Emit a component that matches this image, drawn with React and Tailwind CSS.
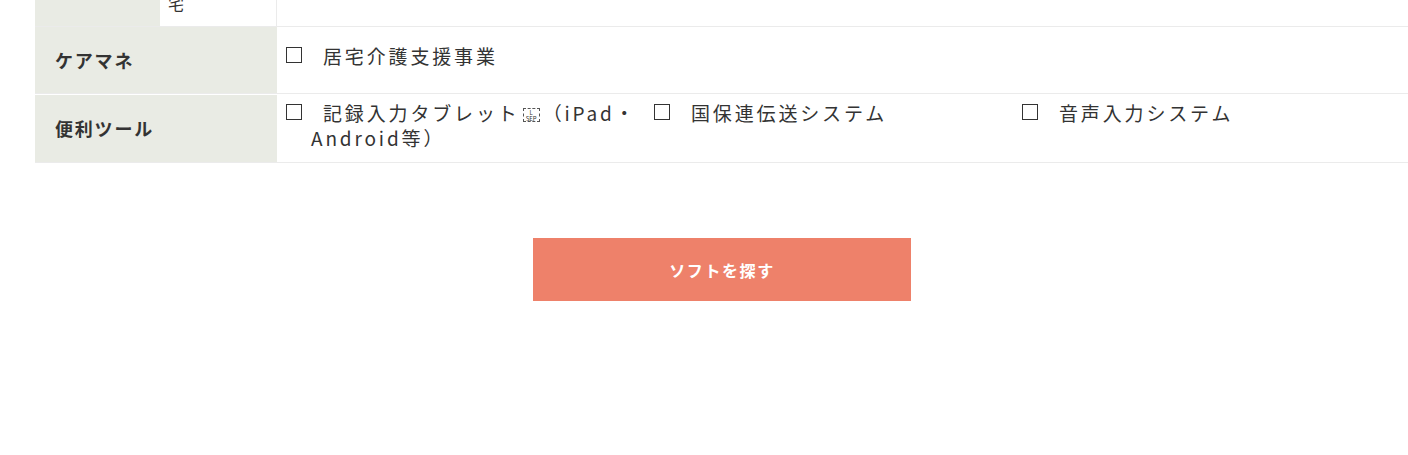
import React from 'react';

const font = { fontFamily: '"Noto Sans CJK JP", "Noto Sans", sans-serif' };

const Check = () => (
  <span className="inline-block w-4 h-4 border border-[#333] bg-white align-[1px] mr-[21px] indent-0"></span>
);

// glyph box shown for the line-separator character
const Sep = () => (
  <span className="inline-block w-[17px] h-[14px] ml-[3px] mr-[3px] pt-[1px] border border-dashed border-[#555] align-[-1px] indent-0 tracking-normal leading-[6px] text-[6px] text-center overflow-hidden">
    L<br />SEP
  </span>
);

const Item = ({ children }) => (
  <div className="w-[368px] pl-[25px] -indent-[25px] pr-4">
    <Check />
    {children}
  </div>
);

export default function App() {
  return (
    <div className="w-full h-[455px] bg-white overflow-hidden text-[#333]" style={font}>
      <div className="ml-[35px] w-[1374px]">
        {/* partial row from above */}
        <div className="flex h-[27px] border-b border-[#ebebeb]">
          <div className="w-[125px] bg-[#e9ebe4]"></div>
          <div className="w-[117px] bg-white border-r border-[#ebebeb] overflow-hidden">
            <div className="-mt-[9px] pl-[8px] text-[16px] leading-[25px]">宅</div>
          </div>
          <div className="flex-1"></div>
        </div>

        {/* ケアマネ */}
        <div className="flex border-b border-[#ebebeb]">
          <div className="w-[242px] shrink-0 bg-[#e9ebe4] flex items-center pl-5 h-[66px] text-[18px] font-bold tracking-[0.1em]">
            ケアマネ
          </div>
          <div className="flex-1 flex items-center pl-[9px] pt-[4px] pb-[14px]">
            <div className="flex text-[19px] leading-[25px] tracking-[0.15em]">
              <Item>居宅介護支援事業</Item>
            </div>
          </div>
        </div>

        {/* 便利ツール */}
        <div className="flex border-b border-[#ebebeb]">
          <div className="w-[242px] shrink-0 bg-[#e9ebe4] border-t border-white flex items-center pl-5 min-h-[66px] text-[18px] font-bold tracking-[0.1em]">
            便利ツール
          </div>
          <div className="flex-1 flex items-center pl-[9px] pt-[6px] pb-3">
            <div className="flex text-[19px] leading-[25px] tracking-[0.15em]">
              <Item>
                記録入力タブレット<Sep />（iPad・Android等）
              </Item>
              <Item>国保連伝送システム</Item>
              <Item>音声入力システム</Item>
            </div>
          </div>
        </div>

        <div className="flex justify-center mt-[75px]">
          <button className="w-[378px] h-[63px] bg-[#ee816a] text-white text-[16px] font-bold tracking-[0.1em]">
            ソフトを探す
          </button>
        </div>
      </div>
    </div>
  );
}
